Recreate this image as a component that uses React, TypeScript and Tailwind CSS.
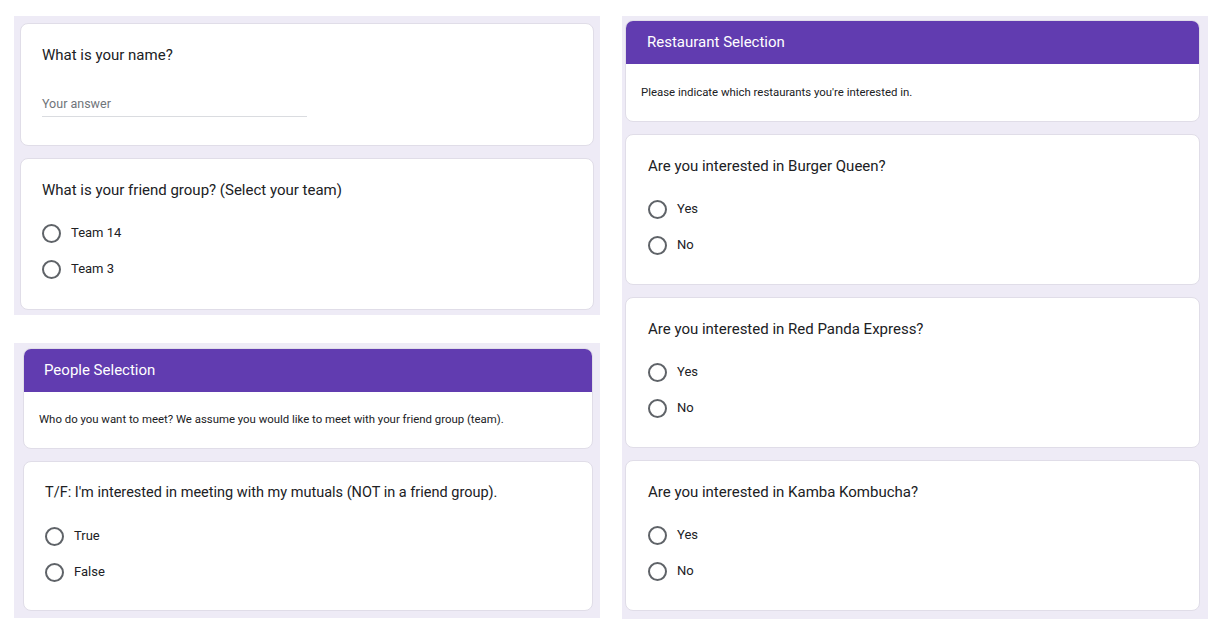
import React from "react";

const Radio = ({ label }: { label: string }) => (
  <div className="flex h-[36px] items-center">
    <span className="h-[19px] w-[19px] shrink-0 rounded-full border-2 border-[#5f6368]" />
    <span className="ml-[10px] text-[13px] text-[#202124]">{label}</span>
  </div>
);

const QuestionCard = ({
  question,
  options,
  className = "",
  size = "text-[15px]",
}: {
  question: string;
  options: string[];
  className?: string;
  size?: string;
}) => (
  <div className={`rounded-lg border border-[#e0dde8] bg-white pt-[21px] ${className}`}>
    <div className={`${size} leading-[20px] text-[#202124]`}>{question}</div>
    <div className="mt-[15px]">
      {options.map((o) => (
        <Radio key={o} label={o} />
      ))}
    </div>
  </div>
);

const SectionHeader = ({
  title,
  description,
  titlePad,
  bodyHeight,
}: {
  title: string;
  description: string;
  titlePad: string;
  bodyHeight: string;
}) => (
  <div className="overflow-hidden rounded-lg border border-[#e0dde8] bg-white">
    <div className={`flex h-[43px] items-center bg-[#613cb0] ${titlePad} text-[15px] text-white`}>
      {title}
    </div>
    <div className={`flex ${bodyHeight} items-center pl-[15px] text-[11.4px] text-[#202124]`}>
      {description}
    </div>
  </div>
);

export default function App() {
  return (
    <div
      className="flex h-[630px] w-[1218px] gap-[22px] bg-white pl-[14px] pt-[16px]"
      style={{ fontFamily: "Roboto, 'Liberation Sans', sans-serif" }}
    >
      {/* left column */}
      <div className="flex w-[586px] flex-col gap-[28px]">
        <div className="flex flex-col gap-[12px] bg-[#eeebf6] px-[6px] pt-[7px] pb-[5px]">
          <div className="h-[123px] rounded-lg border border-[#e0dde8] bg-white pl-[21px] pt-[21px]">
            <div className="text-[15px] leading-[20px] text-[#202124]">What is your name?</div>
            <div className="mt-[30px] w-[265px] border-b border-[#dadce0] pb-[3px] text-[12.5px] leading-[18px] text-[#70757a]">
              Your answer
            </div>
          </div>
          <QuestionCard
            className="pl-[21px] pb-[22px]"
            question="What is your friend group? (Select your team)"
            options={["Team 14", "Team 3"]}
          />
        </div>

        <div className="flex flex-col gap-[12px] bg-[#eeebf6] pl-[9px] pr-[7px] pt-[5px] pb-[7px]">
          <SectionHeader
            title="People Selection"
            titlePad="pl-[20px]"
            bodyHeight="h-[56px]"
            description="Who do you want to meet? We assume you would like to meet with your friend group (team)."
          />
          <QuestionCard
            className="pl-[21px] pb-[20px]"
            size="text-[14.5px]"
            question="T/F: I'm interested in meeting with my mutuals (NOT in a friend group)."
            options={["True", "False"]}
          />
        </div>
      </div>

      {/* right column */}
      <div className="flex h-[603px] w-[586px] flex-col gap-[12px] bg-[#eeebf6] pl-[3px] pr-[8px] pt-[4px]">
        <SectionHeader
          title="Restaurant Selection"
          titlePad="pl-[21px]"
          bodyHeight="h-[57px]"
          description="Please indicate which restaurants you're interested in."
        />
        <QuestionCard
          className="pl-[22px] pb-[21px]"
          question="Are you interested in Burger Queen?"
          options={["Yes", "No"]}
        />
        <QuestionCard
          className="pl-[22px] pb-[21px]"
          question="Are you interested in Red Panda Express?"
          options={["Yes", "No"]}
        />
        <QuestionCard
          className="pl-[22px] pb-[21px]"
          question="Are you interested in Kamba Kombucha?"
          options={["Yes", "No"]}
        />
      </div>
    </div>
  );
}
